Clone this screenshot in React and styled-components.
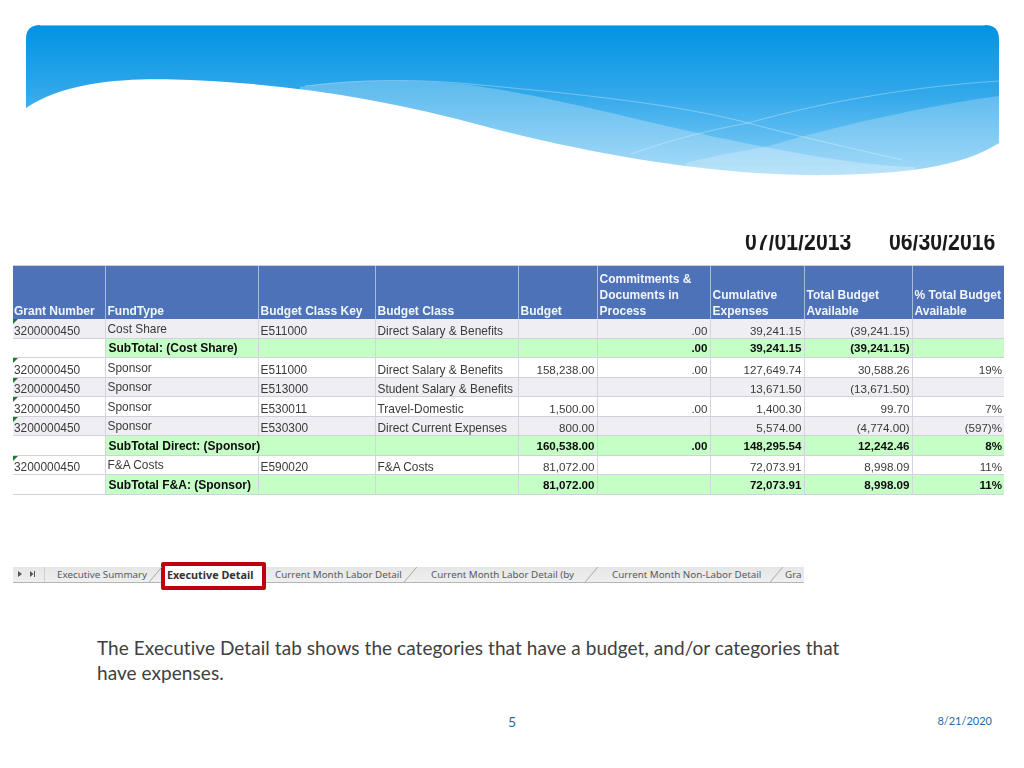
import React from "react";
import styled, { createGlobalStyle } from "styled-components";

const GlobalStyle = createGlobalStyle`
    html, body {
        margin: 0;
        background: #ffffff;
    }
    body {
        font-family: "Liberation Sans", Arial, sans-serif;
    }
`;

const rows = [
    { kind: "stripe", flag: true, cells: ["3200000450", "Cost Share", "E511000", "Direct Salary & Benefits", "", ".00", "39,241.15", "(39,241.15)", ""] },
    { kind: "total", cells: ["", "SubTotal: (Cost Share)", "", "", "", ".00", "39,241.15", "(39,241.15)", ""] },
    { kind: "plain", flag: true, cells: ["3200000450", "Sponsor", "E511000", "Direct Salary & Benefits", "158,238.00", ".00", "127,649.74", "30,588.26", "19%"] },
    { kind: "stripe", flag: true, cells: ["3200000450", "Sponsor", "E513000", "Student Salary & Benefits", "", "", "13,671.50", "(13,671.50)", ""] },
    { kind: "plain", flag: true, cells: ["3200000450", "Sponsor", "E530011", "Travel-Domestic", "1,500.00", ".00", "1,400.30", "99.70", "7%"] },
    { kind: "stripe", flag: true, cells: ["3200000450", "Sponsor", "E530300", "Direct Current Expenses", "800.00", "", "5,574.00", "(4,774.00)", "(597)%"] },
    { kind: "total", span: true, cells: ["", "SubTotal Direct: (Sponsor)", "", "", "160,538.00", ".00", "148,295.54", "12,242.46", "8%"] },
    { kind: "plain", flag: true, cells: ["3200000450", "F&A Costs", "E590020", "F&A Costs", "81,072.00", "", "72,073.91", "8,998.09", "11%"] },
    { kind: "total", cells: ["", "SubTotal F&A: (Sponsor)", "", "", "81,072.00", "", "72,073.91", "8,998.09", "11%"] },
];

const headers = [
    "Grant Number",
    "FundType",
    "Budget Class Key",
    "Budget Class",
    "Budget",
    "Commitments & Documents in Process",
    "Cumulative Expenses",
    "Total Budget Available",
    "% Total Budget Available",
];

const widths = [92, 153, 117, 143, 79, 113, 94, 108, 92];

function Banner() {
    return (
        <BannerArt viewBox="26 25 973 151" preserveAspectRatio="none">
            <defs>
                <linearGradient id="sky" x1="0" y1="0" x2="0" y2="1">
                    <stop offset="0" stopColor="#0093e3" />
                    <stop offset="0.45" stopColor="#31a8ea" />
                    <stop offset="1" stopColor="#8ad0f7" />
                </linearGradient>
            </defs>
            <path d="M26 176 L26 39 Q26 25 40 25 L985 25 Q999 25 999 39 L999 176 Z" fill="url(#sky)" />
            <path d="M40 25.5 L985 25.5" stroke="#6cc0f0" strokeWidth="1" />
            <path d="M300 87 C350 79 420 79 470 85 C560 97 650 125 765 147 C830 160 880 166 915 167 L915 176 L300 176 Z" fill="#ffffff" opacity="0.25" />
            <path d="M686 163 C712 156 740 151 765 147 C840 125 930 105 999 96 L999 176 L686 176 Z" fill="#ffffff" opacity="0.22" />
            <path d="M305 86 C360 79 420 79 470 84 C590 95 680 105 748 123 C800 137 860 150 902 160" fill="none" stroke="#ffffff" strokeOpacity="0.4" strokeWidth="0.8" />
            <path d="M631 154 C670 140 710 130 748 123 C830 100 920 86 999 81" fill="none" stroke="#ffffff" strokeOpacity="0.4" strokeWidth="0.8" />
            <path d="M26 108 C70 78 140 78 190 80 C290 84 390 100 480 125 C600 157 730 177 830 175 C900 174 960 168 999 143 L999 176 L26 176 Z" fill="#ffffff" />
        </BannerArt>
    );
}

function BudgetTable() {
    return (
        <Sheet>
            <colgroup>
                {widths.map((w, i) => (
                    <col key={i} width={w} />
                ))}
            </colgroup>
            <thead>
                <tr>
                    {headers.map((h) => (
                        <HeadCell key={h}>{h}</HeadCell>
                    ))}
                </tr>
            </thead>
            <tbody>
                {rows.map((row, r) => (
                    <tr key={r}>
                        {row.cells.map((text, c) => {
                            if (row.span && c === 2) return null;
                            return (
                                <Cell
                                    key={c}
                                    colSpan={row.span && c === 1 ? 2 : 1}
                                    $kind={row.cells[0] === "" && c === 0 ? "plain" : row.kind}
                                    $numeric={c > 3}
                                    $raised={c === 1 && row.kind !== "total"}
                                    $flag={c === 0 && row.flag}
                                >
                                    {text}
                                </Cell>
                            );
                        })}
                    </tr>
                ))}
            </tbody>
        </Sheet>
    );
}

function TabStrip() {
    return (
        <Strip>
            <NavArrows>
                <svg width="24" height="10" viewBox="0 0 24 10">
                    <path d="M5 2 L9 5 L5 8 Z" fill="#555" />
                    <path d="M17 2 L20.5 5 L17 8 Z" fill="#555" />
                    <rect x="21" y="2" width="1" height="6" fill="#555" />
                </svg>
            </NavArrows>
            <Tab $width={93} $left={12}>Executive Summary</Tab>
            <Slash $left={5} />
            <ActiveTab>Executive Detail</ActiveTab>
            <Tab $width={125} $left={9}>Current Month Labor Detail</Tab>
            <Slash $left={10} />
            <Tab $width={146} $left={20}>Current Month Labor Detail (by</Tab>
            <Slash $left={14} />
            <Tab $width={151} $left={20}>Current Month Non-Labor Detail</Tab>
            <Slash $left={13} />
            <Tab $width={17} $left={8}>Gra</Tab>
        </Strip>
    );
}

export default function App() {
    return (
        <Page>
            <GlobalStyle />
            <Banner />
            <DateRow>
                <DateText>07/01/2013</DateText>
                <DateText>06/30/2016</DateText>
            </DateRow>
            <BudgetTable />
            <TabStrip />
            <Caption>
                The Executive Detail tab shows the categories that have a budget, and/or categories that have expenses.
            </Caption>
            <Footer>
                <PageNumber>5</PageNumber>
                <FooterDate>8/21/2020</FooterDate>
            </Footer>
        </Page>
    );
}

const Page = styled.div`
    width: 1024px;
    height: 768px;
    overflow: hidden;
    display: flex;
    flex-direction: column;
    background: #ffffff;
`;

const BannerArt = styled.svg`
    display: block;
    width: 973px;
    height: 151px;
    margin: 25px 0 0 26px;
    flex: none;
`;

const DateRow = styled.div`
    height: 16px;
    margin-top: 59px;
    padding-right: 28px;
    display: flex;
    justify-content: flex-end;
    align-items: flex-end;
    gap: 37px;
    overflow: hidden;
    flex: none;
`;

const DateText = styled.span`
    width: 107px;
    font-size: 25px;
    line-height: 19px;
    font-weight: 700;
    color: #1a1a1a;
    white-space: nowrap;
    transform: scaleX(0.85);
    transform-origin: left center;
`;

const Sheet = styled.table`
    width: 991px;
    margin: 14px 0 0 13px;
    table-layout: fixed;
    border-collapse: collapse;
    filter: blur(0.3px);
    flex: none;
`;

const HeadCell = styled.th`
    height: 53px;
    padding: 0 0 0 2px;
    box-sizing: border-box;
    background: #4d72b8;
    border-left: 1px solid #a9bbdd;
    border-top: 1px solid #c9cfdc;
    color: #f2f5fb;
    font-weight: 700;
    font-size: 12px;
    line-height: 16px;
    text-align: left;
    vertical-align: bottom;
    &:first-child {
        border-left: none;
        padding-left: 1px;
    }
`;

const cellBackgrounds = {
    plain: "#ffffff",
    stripe: "#eeeef3",
    total: "#c6ffc6",
};

const cellPadding = (props) => {
    if (props.$raised) return "1px 1px 0 2px";
    if (props.$kind === "total") return props.$numeric ? "1px 2px 0 2px" : "1px 1px 0 3px";
    return props.$numeric ? "5px 2px 0 2px" : "5px 1px 0 2px";
};

const cellFontSize = (props) => {
    if (props.$numeric) return "11.6px";
    return props.$kind === "total" ? "12px" : "11.9px";
};

const Cell = styled.td`
    position: relative;
    height: 19.5px;
    padding: ${cellPadding};
    box-sizing: border-box;
    background: ${(props) => cellBackgrounds[props.$kind]};
    border-left: 1px solid #d3d6df;
    border-bottom: 1px solid #cfd2dc;
    color: ${(props) => (props.$kind === "total" ? "#0c0c0c" : "#3a3a3a")};
    font-size: ${cellFontSize};
    font-weight: ${(props) => (props.$kind === "total" ? 700 : 400)};
    line-height: 12px;
    white-space: nowrap;
    text-align: ${(props) => (props.$numeric ? "right" : "left")};
    &:first-child {
        border-left: none;
        padding-left: 1px;
    }
    &::before {
        content: "";
        display: ${(props) => (props.$flag ? "block" : "none")};
        position: absolute;
        top: 0;
        left: 0;
        border-style: solid;
        border-width: 5px 5px 0 0;
        border-color: #1f7a2e transparent transparent transparent;
    }
`;

const Strip = styled.div`
    width: 791px;
    height: 15px;
    margin: 72px 0 0 13px;
    box-sizing: content-box;
    display: flex;
    align-items: center;
    background: linear-gradient(#e6e6e6, #efefef);
    border-bottom: 1px solid #b5b5b5;
    font-family: "Noto Sans", "Open Sans", sans-serif;
    font-size: 9.8px;
    color: #555a60;
    flex: none;
`;

const NavArrows = styled.div`
    width: 31px;
    height: 100%;
    display: flex;
    align-items: center;
    border-right: 1px solid #cfcfcf;
    flex: none;
`;

const Tab = styled.span`
    width: ${(props) => props.$width}px;
    margin-left: ${(props) => props.$left}px;
    white-space: nowrap;
    flex: none;
`;

const ActiveTab = styled.span`
    width: 105px;
    height: 28px;
    margin: -4px 0 -8px 5px;
    padding: 0 0 4px 2px;
    box-sizing: border-box;
    display: flex;
    align-items: center;
    background: #ffffff;
    border: 4px solid #c00010;
    border-radius: 2px;
    color: #333333;
    font-size: 10.8px;
    font-weight: 700;
    white-space: nowrap;
    flex: none;
`;

const Slash = styled.span`
    width: 1px;
    height: 15px;
    margin-left: ${(props) => props.$left}px;
    background: #a9a9a9;
    transform: skewX(-40deg);
    flex: none;
`;

const Caption = styled.p`
    width: 750px;
    margin: 52px 0 0 97px;
    font-family: Lato, "Open Sans", sans-serif;
    font-size: 19px;
    letter-spacing: 0.06px;
    line-height: 25px;
    color: #404040;
    flex: none;
`;

const Footer = styled.div`
    margin-top: 28px;
    padding-right: 32px;
    display: flex;
    align-items: flex-start;
    font-family: Lato, "Open Sans", sans-serif;
    flex: none;
`;

const PageNumber = styled.span`
    margin-left: 508px;
    font-size: 14px;
    color: #1f6aa5;
`;

const FooterDate = styled.span`
    margin-left: auto;
    padding-top: 1px;
    font-size: 11px;
    color: #1f6aa5;
`;
